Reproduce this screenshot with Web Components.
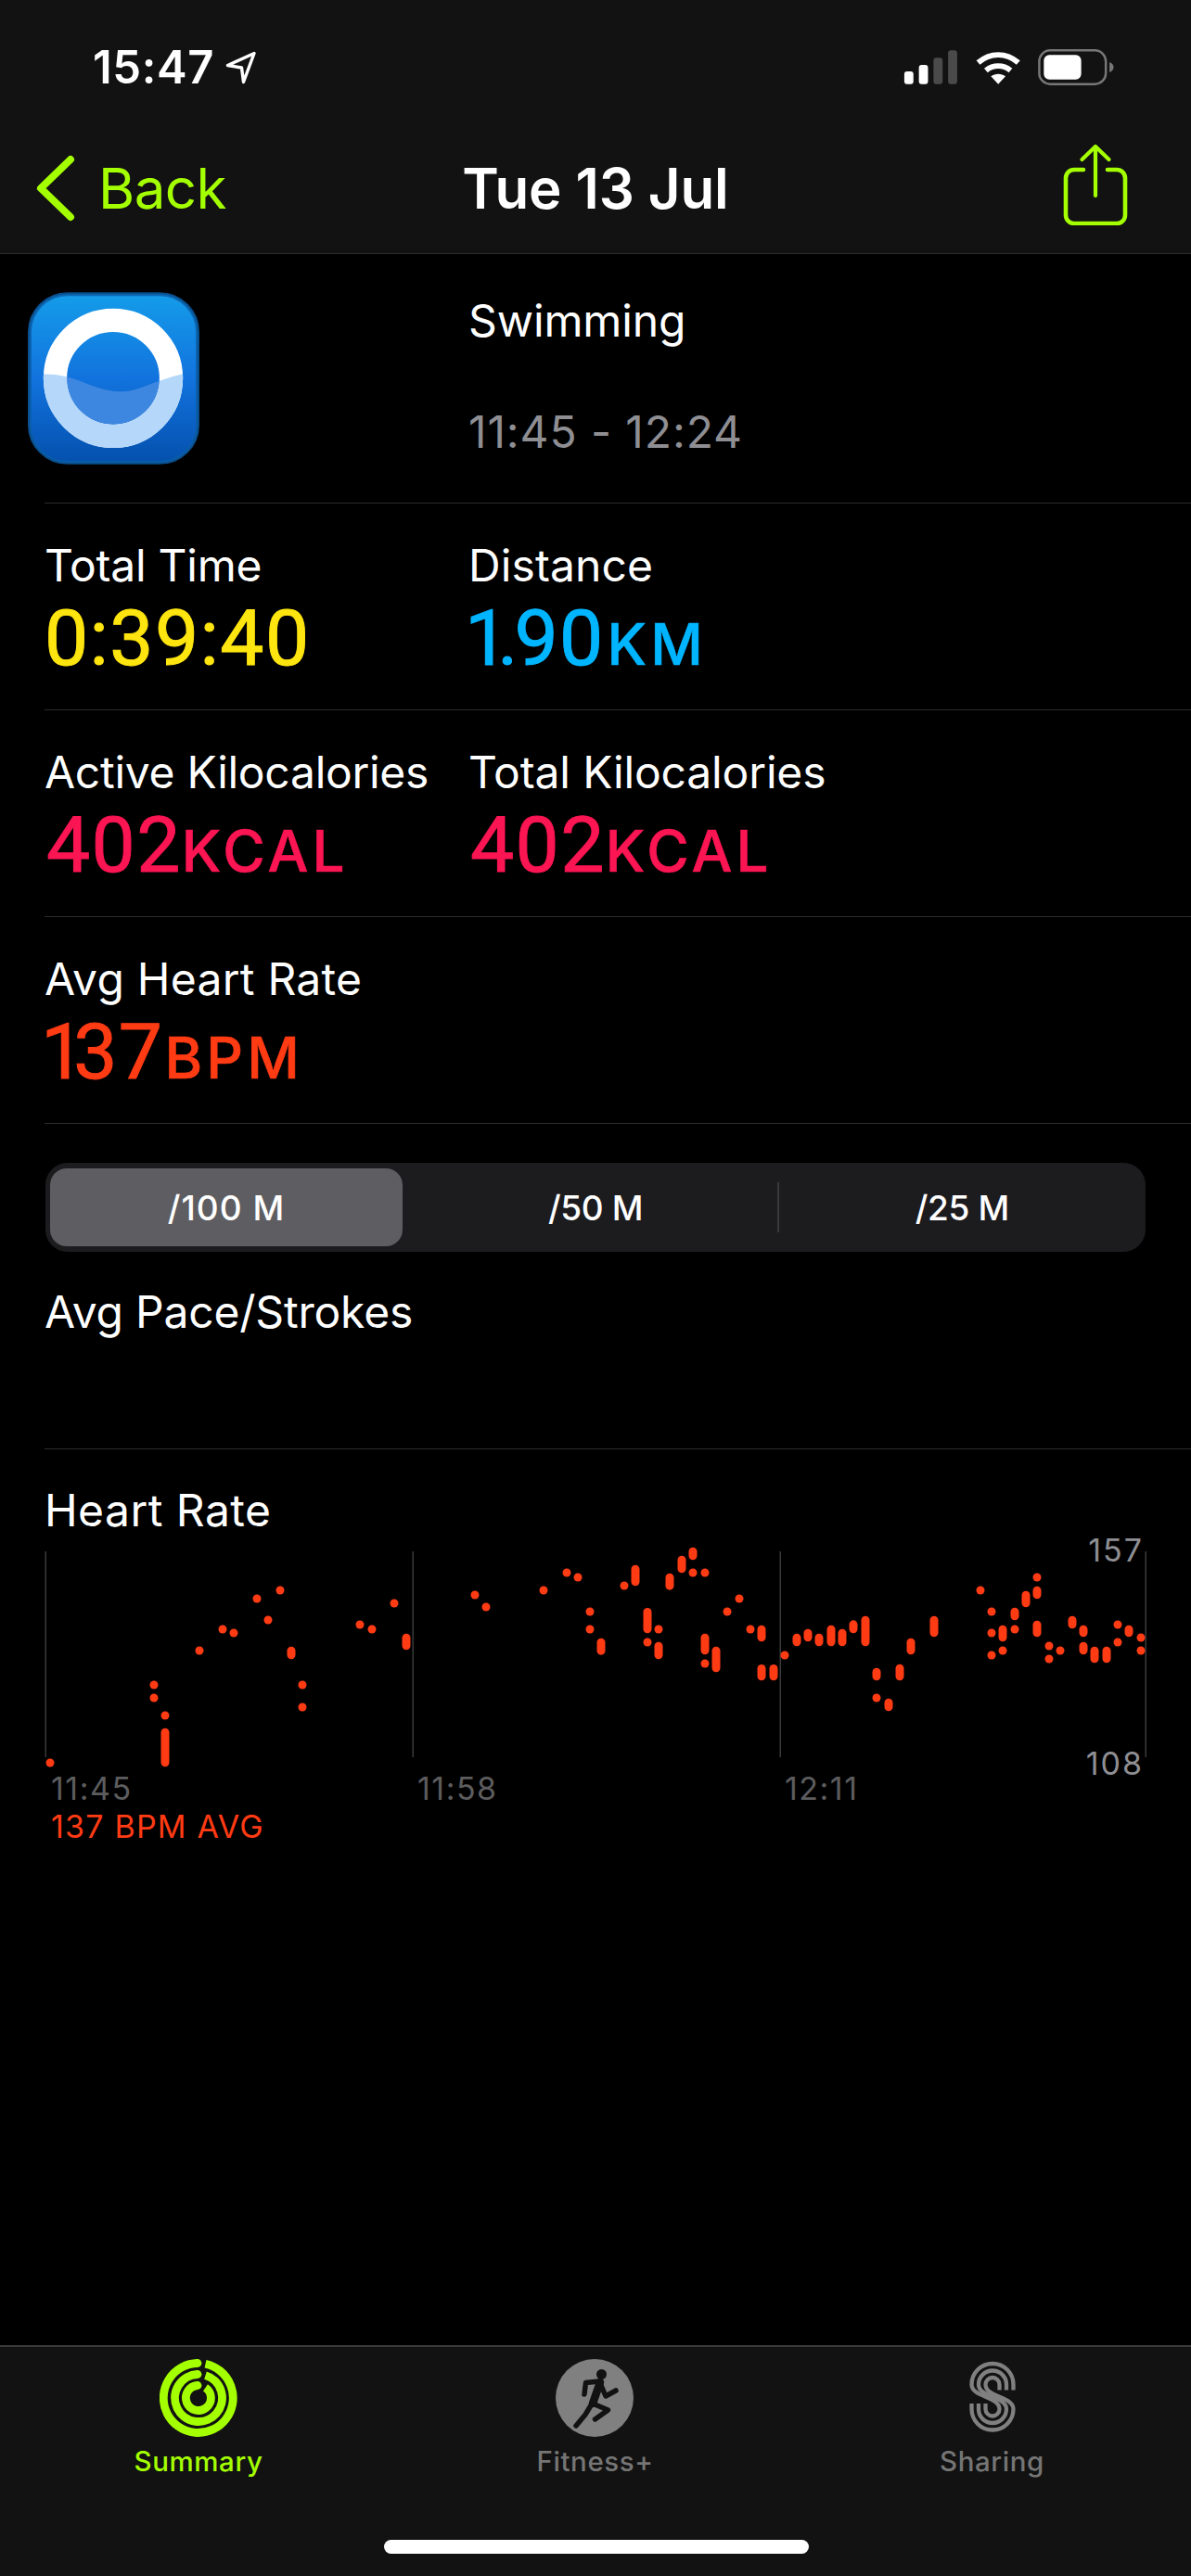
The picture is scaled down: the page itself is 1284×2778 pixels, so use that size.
<!DOCTYPE html>
<html lang="en">
<head>
<meta charset="utf-8">
<title>Tue 13 Jul</title>
<style>
html,body{margin:0;padding:0;background:#000;}
body{width:1284px;height:2778px;overflow:hidden;font-family:Inter,"Liberation Sans",sans-serif;color:#fff;}
#app{display:flex;flex-direction:column;height:2778px;}
#content{flex:1;}
</style>
</head>
<body>
<div id="app">
  <top-bar title="Tue 13 Jul"></top-bar>
  <div id="content">
    <workout-head name="Swimming" time="11:45 - 12:24"></workout-head>
    <metric-row>
      <metric-cell label="Total Time" ls="-.25" value="0:39:40" color="#ffe50f"></metric-cell>
      <metric-cell label="Distance" ls=".1" value="1.90" unit="KM" gap="3" color="#00b5ff"></metric-cell>
    </metric-row>
    <metric-row>
      <metric-cell label="Active Kilocalories" ls="-.28" value="402" unit="KCAL" indent="2" color="#fb1553"></metric-cell>
      <metric-cell label="Total Kilocalories" ls="-.15" value="402" unit="KCAL" indent="2" color="#fb1553"></metric-cell>
    </metric-row>
    <metric-row>
      <metric-cell label="Avg Heart Rate" ls=".25" value="137" unit="BPM" gap="1" color="#ff3b14"></metric-cell>
    </metric-row>
    <pace-section></pace-section>
    <hr-chart></hr-chart>
  </div>
  <tab-bar></tab-bar>
</div>

<script>
// barra superior: status + navegacion
class TopBar extends HTMLElement {
  connectedCallback() {
    const shadow = this.attachShadow({ mode: 'open' });
    shadow.innerHTML = `
      <style>
        :host{display:block;background:#121212;border-bottom:1px solid #2c2c2e;height:274px;box-sizing:border-box;font-family:Inter,"Liberation Sans",sans-serif;}
        .status{height:118px;display:flex;justify-content:space-between;padding:0 82px 0 100px;align-items:flex-start;}
        .clock{display:flex;align-items:flex-start;gap:12px;padding-top:42px;}
        .clock span{font-size:49px;line-height:62px;font-weight:600;color:#fff;letter-spacing:.6px;}
        .clock svg{margin-top:13px;}
        .status svg.right{margin-top:50px;}
        .nav{height:155px;display:grid;grid-template-columns:1fr auto 1fr;align-items:start;}
        .back{display:flex;align-items:flex-start;color:#a4ff00;padding-left:36px;}
        .back svg{margin-top:46px;}
        .back span{font-size:60px;line-height:76px;letter-spacing:-.6px;margin:47px 0 0 20px;}
        .title{font-size:60px;line-height:76px;font-weight:600;color:#fff;letter-spacing:-.1px;margin-top:47px;}
        .share{justify-self:end;margin:33px 66px 0 0;}
      </style>
      <div class="status">
        <div class="clock">
          <span>15:47</span>
          <svg width="34" height="36" viewBox="0 0 34 36" fill="none" stroke="#fff" stroke-width="3.4" stroke-linejoin="round"><path d="M31 2.5 2.5 15.5l15 2.5 2 15.5z"/></svg>
        </div>
        <svg class="right" width="232" height="44" viewBox="968 50 236 44">
          <rect x="973" y="77" width="10" height="14" rx="3" fill="#fff"/>
          <rect x="989" y="70" width="10" height="21" rx="3" fill="#fff"/>
          <rect x="1005" y="62" width="10" height="29" rx="3" fill="#4a4a4a"/>
          <rect x="1021" y="54" width="10" height="37" rx="3" fill="#4a4a4a"/>
          <path d="M1054 67.5c13-11.5 31-11.5 44 0" fill="none" stroke="#fff" stroke-width="6"/>
          <path d="M1062.5 76c8-6.500 19-6.500 27 0" fill="none" stroke="#fff" stroke-width="6"/>
          <path d="M1076 91l-8-8.500c4.500-3.500 11.500-3.500 16 0z" fill="#fff"/>
          <rect x="1121" y="54" width="73" height="37" rx="12" fill="none" stroke="#777" stroke-width="2.5"/>
          <rect x="1126" y="59" width="41" height="27" rx="6" fill="#fff"/>
          <path d="M1198 67c3 1 4.500 3 4.500 5.500s-1.500 4.500-4.500 5.500z" fill="#777"/>
        </svg>
      </div>
      <div class="nav">
        <div class="back">
          <svg width="50" height="80" viewBox="36 164 50 80" fill="none" stroke="#a4ff00" stroke-width="8" stroke-linecap="round" stroke-linejoin="round"><path d="M76 172 44 203l32 31"/></svg>
          <span>Back</span>
        </div>
        <div class="title">${this.getAttribute('title')}</div>
        <svg class="share" width="74" height="92" viewBox="1144 151 74 92" fill="none" stroke="#a4ff00" stroke-linecap="round" stroke-linejoin="round">
          <path d="M1168 183h-10a9 9 0 0 0-9 9v40a9 9 0 0 0 9 9h46a9 9 0 0 0 9-9v-40a9 9 0 0 0-9-9h-10" stroke-width="4.600"/>
          <path d="M1181 211v-52M1166.500 172l14.500-14 14.500 14" stroke-width="4.200"/>
        </svg>
      </div>`;
  }
}
customElements.define('top-bar', TopBar);

class WorkoutHead extends HTMLElement {
  connectedCallback() {
    const shadow = this.attachShadow({ mode: 'open' });
    shadow.innerHTML = `
      <style>
        :host{display:block;position:relative;height:269px;font-family:Inter,"Liberation Sans",sans-serif;}
        .wrap{display:flex;height:268px;}
        .logo{width:505px;padding:41px 0 0 30px;box-sizing:border-box;}
        .txt{display:flex;flex-direction:column;}
        .name{font-size:48px;line-height:60px;margin-top:42px;color:#fff;letter-spacing:-.1px;}
        .time{font-size:48px;line-height:60px;margin-top:60px;color:#8e8e93;letter-spacing:.9px;}
        .line{margin-left:48px;height:1px;background:#2c2c2e;}
      </style>
      <div class="wrap">
        <div class="logo">
          <svg width="185" height="186" viewBox="92 105 555 557">
            <defs>
              <linearGradient id="bg" x1="0" y1="0" x2="0" y2="1">
                <stop offset="0" stop-color="#149ce9"/>
                <stop offset=".5" stop-color="#1273de"/>
                <stop offset="1" stop-color="#0450ae"/>
              </linearGradient>
              <clipPath id="water"><path d="M120 372C175 366 215 376 260 392 310 412 350 428 400 426 455 424 510 385 620 363V630H120Z"/></clipPath>
            </defs>
            <rect x="98" y="111" width="543" height="545" rx="122" fill="url(#bg)" stroke="#0a5ea8" stroke-opacity=".85" stroke-width="12"/>
            <circle cx="368" cy="383" r="187.500" fill="none" stroke="#fff" stroke-width="76"/>
            <g clip-path="url(#water)">
              <circle cx="368" cy="383" r="187.500" fill="none" stroke="#b5d8fa" stroke-width="76"/>
              <circle cx="368" cy="383" r="149.500" fill="#3e87e0"/>
            </g>
          </svg>
        </div>
        <div class="txt">
          <div class="name">${this.getAttribute('name')}</div>
          <div class="time">${this.getAttribute('time')}</div>
        </div>
      </div>
      <div class="line"></div>`;
  }
}
customElements.define('workout-head', WorkoutHead);

class MetricRow extends HTMLElement {
  connectedCallback() {
    const shadow = this.attachShadow({ mode: 'open' });
    shadow.innerHTML = `
      <style>
        :host{display:block;}
        .cells{display:grid;grid-template-columns:457px 1fr;height:222px;padding-left:48px;}
        .line{margin-left:48px;height:1px;background:#2c2c2e;}
      </style>
      <div class="cells"><slot></slot></div>
      <div class="line"></div>`;
  }
}
customElements.define('metric-row', MetricRow);

class MetricCell extends HTMLElement {
  connectedCallback() {
    const unit = this.getAttribute('unit');
    const color = this.getAttribute('color');
    // el 1 y el punto son mas estrechos en la fuente original
    const value = this.getAttribute('value')
      .replace(/1/g, '<span class="one">1</span>')
      .replace('.', '<span class="dot">.</span>');
    const shadow = this.attachShadow({ mode: 'open' });
    shadow.innerHTML = `
      <style>
        :host{display:block;font-family:Inter,"Liberation Sans",sans-serif;white-space:nowrap;}
        .label{font-size:48px;line-height:60px;margin-top:37px;color:#fff;letter-spacing:${this.getAttribute('ls')}px;}
        .value{font-family:Roboto,sans-serif;font-size:84px;line-height:90px;margin-top:4px;letter-spacing:1.4px;color:${color};-webkit-text-stroke:1px ${color};padding-left:${this.getAttribute('indent') || 0}px;}
        .one{letter-spacing:-12px;margin-left:-4px;}
        .dot{letter-spacing:-4px;}
        .unit{font-family:Inter,sans-serif;font-size:62px;font-weight:500;letter-spacing:4.1px;margin-left:${this.getAttribute('gap') || 0}px;-webkit-text-stroke:.6px ${color};}
      </style>
      <div class="label">${this.getAttribute('label')}</div>
      <div class="value">${value}${unit ? `<span class="unit">${unit}</span>` : ''}</div>`;
  }
}
customElements.define('metric-cell', MetricCell);

class PaceSection extends HTMLElement {
  connectedCallback() {
    const shadow = this.attachShadow({ mode: 'open' });
    shadow.innerHTML = `
      <style>
        :host{display:flex;flex-direction:column;font-family:Inter,"Liberation Sans",sans-serif;height:351px;padding-top:42px;box-sizing:border-box;}
        .seg{margin:0 49px;height:96px;background:#1c1c1f;border-radius:24px;display:grid;grid-template-columns:repeat(3,1fr);align-items:center;position:relative;}
        .seg div{font-size:37px;line-height:82px;padding-top:2px;font-weight:500;text-align:center;color:#fff;letter-spacing:-.4px;}
        .seg .on{background:#5e5e62;border-radius:18px;margin-left:5px;width:380px;letter-spacing:1px;}
        .seg .sep{position:absolute;left:789px;top:21px;width:2px;height:54px;background:#3a3a3c;}
        .title{font-size:48px;line-height:60px;margin:35px 0 0 48px;color:#fff;letter-spacing:-.2px;}
        .line{margin:auto 0 0 48px;height:1px;background:#2c2c2e;}
      </style>
      <div class="seg">
        <div class="on">/100 M</div>
        <div>/50 M</div>
        <div>/25 M</div>
        <span class="sep"></span>
      </div>
      <div class="title">Avg Pace/Strokes</div>
      <div class="line"></div>`;
  }
}
customElements.define('pace-section', PaceSection);

// puntos leidos del grafico: [x,y] punto, [x,y1,y2] barra
const hrZones = [
  [0, [[162,783],[498,531],[498,573],[534,630],[534,671,796],[645,420],[720,351],[756,363],[831,252],[867,321],[906,225],[942,407,448],[978,531],[978,603],[1164,336],[1203,351],[1275,267]]],
  [430, [[24,365,418],[246,240],[282,279],[468,225],[543,168],[579,183],[618,294],[618,351],[654,380,434],[729,210],[765,143,211],[804,282,364],[840,351],[804,393],[840,392,448],[876,170,224],[915,113,169],[951,86,127],[951,168],[990,168],[990,365,433],[990,462],[1026,407,490],[1062,294],[1101,252],[1137,351],[1173,338,391],[1173,465,517],[1212,465,517],[1248,435]]],
  [854, [[15,365,406],[51,350,391],[87,365,406],[126,338,406],[162,350,406],[198,322,364],[237,308,406],[273,476,517],[273,573],[312,575,616],[348,464,517],[384,380,433],[459,308,376],[609,225],[645,294],[645,363],[645,435],[681,338,391],[681,420],[720,281,322],[720,351],[756,227,280],[792,183],[792,212,253],[792,323,376],[831,405],[831,447],[867,420],[906,308,349],[942,338,376],[942,392,433],[978,407,460],[1017,407,460],[1053,336],[1053,393],[1089,338,376],[1128,378],[1128,420]]]
];

class HrChart extends HTMLElement {
  connectedCallback() {
    let marks = '';
    for (const [off, pts] of hrZones) {
      for (const p of pts) {
        const x = off + p[0] / 3;
        if (p.length == 2) {
          marks += `<circle cx="${x}" cy="${1640 + p[1] / 3}" r="4.500"/>`;
        } else {
          marks += `<rect x="${x - 4.5}" y="${1640 + p[1] / 3}" width="9" height="${(p[2] - p[1]) / 3}" rx="4.500"/>`;
        }
      }
    }
    const grid = [49, 445, 841, 1235].map(x => `<rect x="${x - 0.5}" y="1673" width="1.500" height="222" fill="#3a3a3c"/>`).join('');
    const shadow = this.attachShadow({ mode: 'open' });
    shadow.innerHTML = `
      <style>
        :host{display:block;position:relative;height:400px;font-family:Inter,"Liberation Sans",sans-serif;}
        svg{position:absolute;left:0;top:0;}
        .title{font-size:48px;line-height:60px;margin:0 0 0 48px;padding-top:36px;color:#fff;letter-spacing:.45px;}
        .axis{position:absolute;left:55px;top:345px;display:grid;grid-template-columns:395px 396px auto;font-size:34px;line-height:42px;color:#5c5c5e;letter-spacing:1.5px;}
        .avg{position:absolute;left:55px;top:386px;font-size:34px;line-height:42px;color:#ff3b14;letter-spacing:1.2px;white-space:nowrap;}
        .y{position:absolute;right:51px;font-size:34px;line-height:42px;color:#8e8e93;letter-spacing:2px;}
      </style>
      <div class="title">Heart Rate</div>
      <svg width="1284" height="400" viewBox="0 1563 1284 400">${grid}<g fill="#ff3b14">${marks}</g></svg>
      <div class="y" style="top:88px">157</div>
      <div class="y" style="top:318px">108</div>
      <div class="axis"><span>11:45</span><span>11:58</span><span>12:11</span></div>
      <div class="avg">137 BPM AVG</div>`;
  }
}
customElements.define('hr-chart', HrChart);

class TabItem extends HTMLElement {
  connectedCallback() {
    const shadow = this.attachShadow({ mode: 'open' });
    shadow.innerHTML = `
      <style>
        :host{display:flex;flex-direction:column;align-items:center;font-family:Inter,"Liberation Sans",sans-serif;color:${this.getAttribute('color')};}
        .ic{height:84px;}
        .t{font-size:29.500px;line-height:36px;font-weight:500;margin-top:8px;letter-spacing:.6px;}
      </style>
      <div class="ic"><slot></slot></div>
      <div class="t">${this.getAttribute('label')}</div>`;
  }
}
customElements.define('tab-item', TabItem);

class TabBar extends HTMLElement {
  connectedCallback() {
    // S de tres hilos: radio de arriba -> radio de abajo
    const cx = 42, yU = 27.5, yL = 54;
    const strand = (r1, r2) => `M${cx + r1} ${yU + 6}V${yU}A${r1} ${r1} 0 0 0 ${cx - r1} ${yU}C${cx - r1} ${yU + 14} ${cx + r2} ${yL - 14} ${cx + r2} ${yL}A${r2} ${r2} 0 0 1 ${cx - r2} ${yL}V${yL - 6}`;
    const shadow = this.attachShadow({ mode: 'open' });
    shadow.innerHTML = `
      <style>
        :host{display:block;height:249px;box-sizing:border-box;background:#121212;border-top:2px solid #3a3a3c;position:relative;}
        .tabs{display:grid;grid-template-columns:428px 427px 429px;padding-top:13px;}
        .tabs>*{justify-self:center;}
        .home{position:absolute;left:414px;top:208px;width:458px;height:15px;border-radius:8px;background:#fff;}
        svg{display:block;}
      </style>
      <div class="tabs">
        <tab-item label="Summary" color="#a4ff00">
          <svg width="84" height="84" viewBox="0 0 84 84" fill="none" stroke="#a4ff00" stroke-width="8.800">
            <path d="M49.500 5.300A37.500 37.500 0 1 1 41 4.500"/>
            <path d="M49.500 17.600A25.500 25.500 0 1 1 41 16.500"/>
            <path d="M49.500 30.800A13.500 13.500 0 1 1 41 28.500"/>
            <g fill="#a4ff00" stroke="none">
              <circle cx="41" cy="4.500" r="4.400"/>
              <circle cx="41" cy="16.500" r="4.400"/>
              <circle cx="41" cy="28.500" r="4.400"/>
            </g>
          </svg>
        </tab-item>
        <tab-item label="Fitness+" color="#757575">
          <svg width="84" height="84" viewBox="0 0 84 84">
            <circle cx="42" cy="42" r="42" fill="#808080"/>
            <g fill="none" stroke="#121212" stroke-width="5.500" stroke-linecap="round" stroke-linejoin="round">
              <circle cx="49.500" cy="16.500" r="5.500" fill="#121212" stroke="none"/>
              <path d="M31 38l1.500-12.500 15-1.500"/>
              <path d="M48 25l-8 23" stroke-width="8.500"/>
              <path d="M48 26l6 14 11-6"/>
              <path d="M40 48l16.500 7-14 10"/>
              <path d="M38 50l-6 10-10 12"/>
            </g>
          </svg>
        </tab-item>
        <tab-item label="Sharing" color="#757575">
          <svg width="84" height="84" viewBox="0 0 84 84" fill="none" stroke="#808080" stroke-width="4.300">
            <path d="${strand(22.5, 7.5)}"/>
            <path d="${strand(15, 15)}"/>
            <path d="${strand(7.5, 22.5)}"/>
          </svg>
        </tab-item>
      </div>
      <div class="home"></div>`;
  }
}
customElements.define('tab-bar', TabBar);
</script>
</body>
</html>
